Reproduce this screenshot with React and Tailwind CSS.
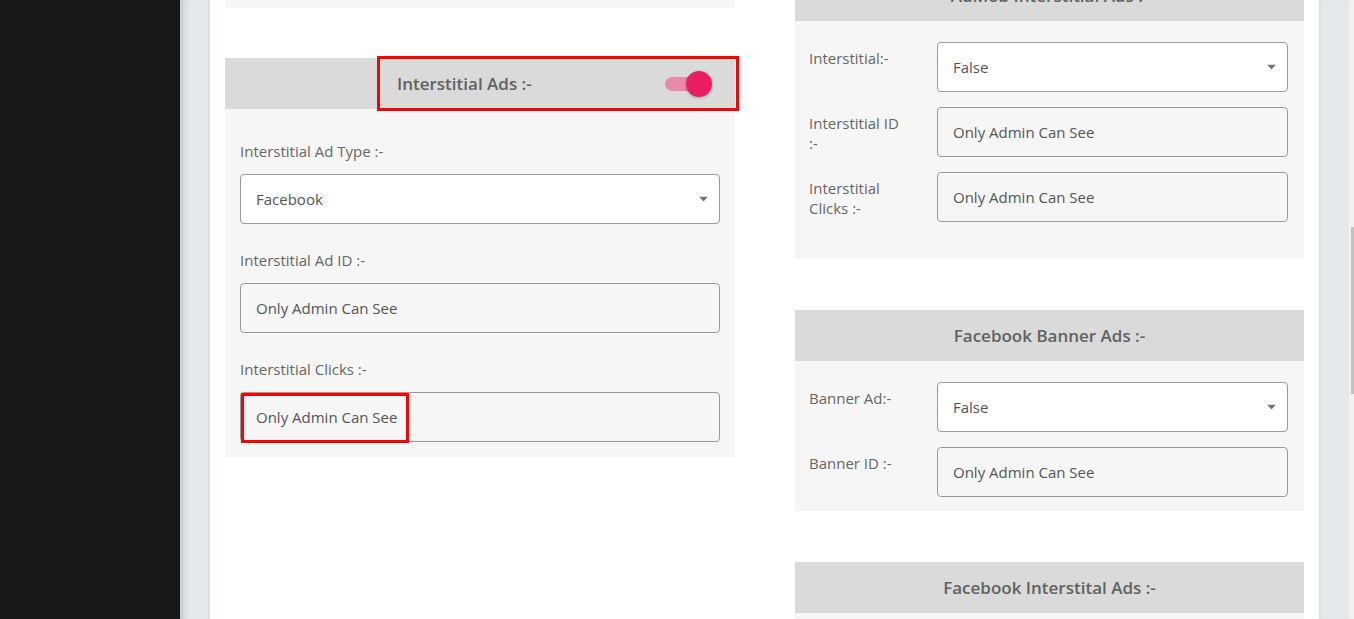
const font = { fontFamily: '"Open Sans", "Liberation Sans", sans-serif' };

function Caret() {
  return (
    <svg width="9" height="5" viewBox="0 0 9 5" className="absolute right-[11px] top-1/2 -translate-y-1/2">
      <path d="M0 0h9L4.5 5z" fill="#757575" />
    </svg>
  );
}

function Select({ value }) {
  return (
    <div className="relative h-[50px] w-full rounded-[4px] border border-[#9a9a9a] bg-white flex items-center pl-[15px] text-[15px] text-[#555]">
      {value}
      <Caret />
    </div>
  );
}

function Input({ value, children }) {
  return (
    <div className="relative h-[50px] w-full rounded-[4px] border border-[#9a9a9a] bg-[#f6f6f6] flex items-center pl-[15px] text-[15px] text-[#555]">
      {value}
      {children}
    </div>
  );
}

function Header({ title, className = "" }) {
  return (
    <div className={`h-[51px] bg-[#dadada] flex items-center justify-center text-[17px] font-semibold text-[#616161] ${className}`}>
      {title}
    </div>
  );
}

function Row({ label, children }) {
  return (
    <div className="flex items-start">
      <div className="w-[128px] shrink-0 pt-[6px] pr-[30px] text-[15px] leading-[20px] text-[#666]">
        {label}
      </div>
      <div className="flex-1">{children}</div>
    </div>
  );
}

function Field({ label, children }) {
  return (
    <div>
      <div className="h-[22px] mb-[11px] text-[15px] leading-[20px] text-[#666]">{label}</div>
      {children}
    </div>
  );
}

export default function App() {
  return (
    <div className="flex h-[619px] w-[1354px] overflow-hidden" style={font}>
      {/* ── Sidebar ───────────────────────────── */}
      <div className="w-[180px] shrink-0 bg-[#191919]" />

      {/* ── Main ──────────────────────────────── */}
      <div className="flex-1 bg-[#e4e9ec] px-[30px] shadow-[inset_8px_0_8px_-6px_rgba(0,0,0,0.18)]">
        <div className="h-full bg-white px-[15px] flex gap-[60px] shadow-[0_0_4px_rgba(0,0,0,0.12)]">
          {/* Left column */}
          <div className="w-[510px] shrink-0">
            <div className="h-[8px] bg-[#f6f6f6]" />
            <div className="mt-[50px]">
              <div className="relative h-[51px] bg-[#dadada] flex items-center">
                <span className="pl-[172px] text-[17px] font-semibold text-[#616161]">Interstitial Ads :-</span>
                <div className="ml-auto mr-[23px] relative w-[47px] h-[26px] flex items-center">
                  <div className="h-[14px] w-[36px] rounded-full bg-[#ea8aaa]" />
                  <div className="absolute right-0 top-0 h-[26px] w-[26px] rounded-full bg-[#e91e63] shadow-[0_1px_3px_rgba(0,0,0,0.25)]" />
                </div>
                <div className="absolute left-[152px] top-[-2px] w-[362px] h-[55px] border-[3px] border-[#ff0000] pointer-events-none" />
              </div>
              <div className="bg-[#f6f6f6] px-[15px] pt-[32px] pb-[15px] flex flex-col gap-[26px]">
                <Field label="Interstitial Ad Type :-">
                  <Select value="Facebook" />
                </Field>
                <Field label="Interstitial Ad ID :-">
                  <Input value="Only Admin Can See" />
                </Field>
                <Field label="Interstitial Clicks :-">
                  <Input value="Only Admin Can See">
                    <div className="absolute left-0 top-0 w-[168px] h-[50px] border-[3px] border-[#ff0000]" />
                  </Input>
                </Field>
              </div>
            </div>
          </div>

          {/* Right column */}
          <div className="w-[509px] shrink-0">
            <Header title="AdMob Interstitial Ads :-" className="-mt-[30px]" />
            <div className="bg-[#f6f6f6] pl-[14px] pr-[16px] pt-[21px] pb-[37px] flex flex-col gap-[15px]">
              <Row label="Interstitial:-">
                <Select value="False" />
              </Row>
              <Row label="Interstitial ID :-">
                <Input value="Only Admin Can See" />
              </Row>
              <Row label="Interstitial Clicks :-">
                <Input value="Only Admin Can See" />
              </Row>
            </div>

            <Header title="Facebook Banner Ads :-" className="mt-[51px]" />
            <div className="bg-[#f6f6f6] pl-[14px] pr-[16px] pt-[21px] pb-[14px] flex flex-col gap-[15px]">
              <Row label="Banner Ad:-">
                <Select value="False" />
              </Row>
              <Row label="Banner ID :-">
                <Input value="Only Admin Can See" />
              </Row>
            </div>

            <Header title="Facebook Interstital Ads :-" className="mt-[51px]" />
            <div className="h-[40px] bg-[#f6f6f6]" />
          </div>
        </div>
      </div>

      {/* ── Scrollbar ─────────────────────────── */}
      <div className="w-[5px] shrink-0 bg-[#f1f1f1] pl-[2px]">
        <div className="mt-[227px] h-[167px] w-[3px] bg-[#c1c1c1]" />
      </div>
    </div>
  );
}
